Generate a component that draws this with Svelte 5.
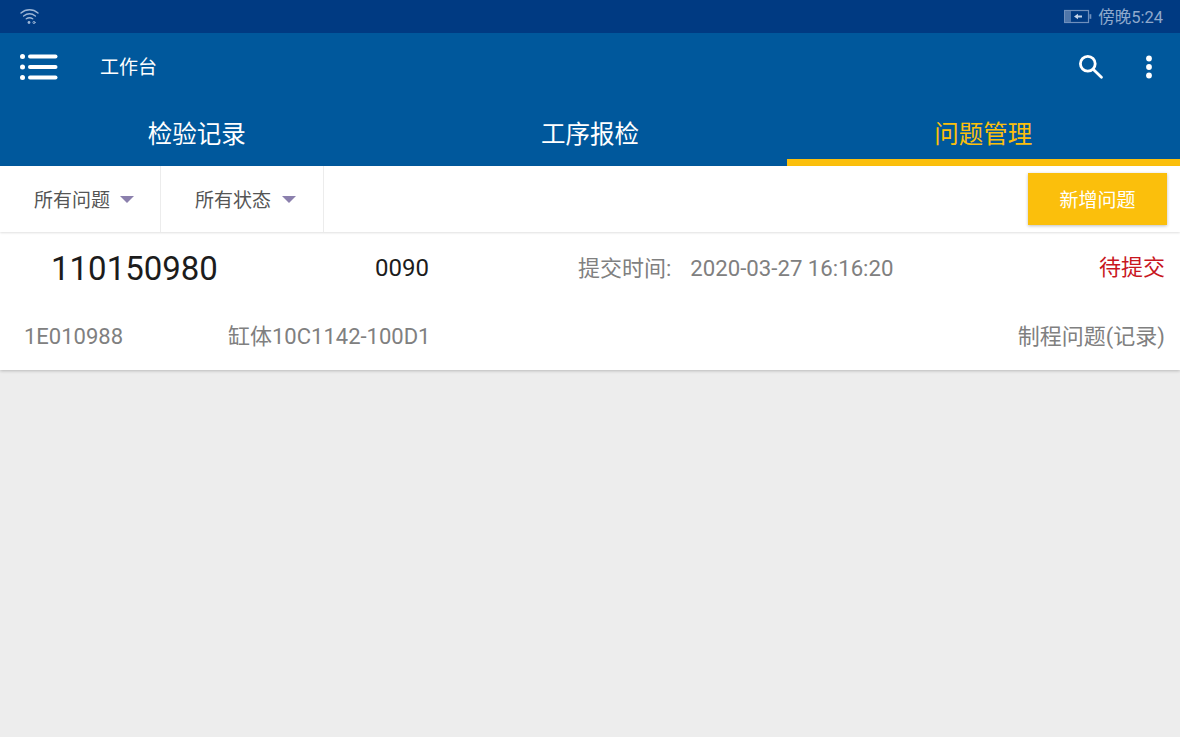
<script>
    const tabs = ['检验记录', '工序报检', '问题管理'];
    let activeTab = 2;
    const filters = ['所有问题', '所有状态'];
</script>

<div class="page">
    <div class="statusbar">
        <svg class="wifi" width="20" height="17" viewBox="0 0 20 17" fill="none" stroke="#9db6d6" stroke-width="1.4" stroke-linecap="round">
            <path d="M1 5 C6 .6 13 .6 18 5" />
            <path d="M3.6 8 C7.5 5 11.5 5 15.4 8" />
            <path d="M6.3 10.8 C8.3 9.4 10.7 9.4 12.7 10.8" />
            <circle cx="9" cy="14.5" r="1.4" fill="#9db6d6" stroke="none" />
            <circle cx="14" cy="14.5" r="1.1" stroke-width="0.9" />
        </svg>
        <div class="status-right">
            <svg width="28" height="15" viewBox="0 0 28 15" fill="none">
                <rect x="0.5" y="1.5" width="24" height="12" stroke="#6f8fbc" stroke-width="1.2" />
                <rect x="1" y="2" width="6" height="11" fill="#4f76aa" />
                <rect x="25.5" y="5.2" width="1.8" height="4.6" fill="#6f8fbc" />
                <path d="M10 7.5 L14 4.8 V6.6 H18 V8.4 H14 V10.2 Z" fill="#c4d3e7" />
            </svg>
            <span class="clock">傍晚5:24</span>
        </div>
    </div>

    <div class="toolbar">
        <svg class="menu" width="40" height="28" viewBox="0 0 40 28" fill="#fff">
            <circle cx="3.5" cy="3.5" r="2.5" />
            <circle cx="3.5" cy="14" r="2.5" />
            <circle cx="3.5" cy="24.5" r="2.5" />
            <rect x="9" y="1.5" width="29.5" height="4" rx="2" />
            <rect x="9" y="12" width="29.5" height="4" rx="2" />
            <rect x="9" y="22.5" width="29.5" height="4" rx="2" />
        </svg>
        <span class="title">工作台</span>
        <div class="actions">
            <svg class="search" width="26" height="26" viewBox="0 0 26 26" fill="none" stroke="#fff" stroke-width="2.8" stroke-linecap="round">
                <circle cx="10.8" cy="10.8" r="7.4" />
                <path d="M16.4 16.4 L24.4 24.2" />
            </svg>
            <svg width="8" height="24" viewBox="0 0 8 24" fill="#fff">
                <circle cx="4" cy="3.5" r="2.9" />
                <circle cx="4" cy="12" r="2.9" />
                <circle cx="4" cy="20.5" r="2.9" />
            </svg>
        </div>
    </div>

    <div class="tabs">
        {#each tabs as tab, i}
            <button class="tab" class:active={i === activeTab} onclick={() => (activeTab = i)}>{tab}</button>
        {/each}
    </div>

    <div class="filterbar">
        {#each filters as filter}
            <div class="filter">
                <span class="filter-label">{filter}</span>
                <i class="caret"></i>
            </div>
        {/each}
        <button class="add">新增问题</button>
    </div>

    <div class="card">
        <div class="row top">
            <span class="code">110150980</span>
            <span class="seq">0090</span>
            <span class="time">提交时间:<span class="date">2020-03-27 16:16:20</span></span>
            <span class="state">待提交</span>
        </div>
        <div class="row bottom">
            <span class="part">1E010988</span>
            <span class="name">缸体10C1142-100D1</span>
            <span class="kind">制程问题(记录)</span>
        </div>
    </div>
</div>

<style>
    :global(body) {
        margin: 0;
        background: #ededed;
    }

    .page {
        height: 737px;
        overflow: hidden;
        background: #ededed;
        font-family: Roboto, "Noto Sans CJK SC", sans-serif;
        line-height: 1.2;
    }

    .statusbar {
        height: 33px;
        background: #003a82;
        display: flex;
        align-items: center;
        justify-content: space-between;
        padding: 0 17px 0 20px;
        color: #8fa9cc;
        font-size: 16.5px;
    }

    .wifi {
        margin-bottom: 1px;
    }

    .status-right {
        display: flex;
        align-items: center;
        gap: 6px;
    }

    .clock {
        padding-top: 2px;
    }

    .toolbar {
        height: 67px;
        background: #00589c;
        display: flex;
        align-items: center;
        padding: 0 27px 0 19px;
        color: #fff;
    }

    .title {
        margin-left: 41px;
        padding-top: 4px;
        font-size: 19px;
    }

    .actions {
        margin-left: auto;
        display: flex;
        align-items: center;
        gap: 42px;
    }

    .search {
        margin-bottom: 2px;
    }

    .tabs {
        height: 66px;
        background: #00589c;
        display: grid;
        grid-template-columns: repeat(3, 1fr);
    }

    .tab {
        border: 0;
        background: none;
        padding: 10px 0 0;
        color: #fff;
        font: inherit;
        font-size: 24.5px;
        box-sizing: border-box;
        border-bottom: 7px solid transparent;
    }

    .tab.active {
        color: #fbbf0c;
        border-bottom-color: #fbbf0c;
    }

    .filterbar {
        height: 66px;
        background: #fff;
        display: flex;
        align-items: center;
        padding-right: 13px;
        box-shadow: 0 1px 2px rgba(0, 0, 0, 0.12);
        position: relative;
    }

    .filter {
        height: 100%;
        width: 161px;
        box-sizing: border-box;
        padding-left: 34px;
        border-right: 1px solid #ececec;
        display: flex;
        align-items: center;
        gap: 10px;
        font-size: 19px;
        color: #555;
    }

    .filter + .filter {
        width: 163px;
        gap: 11px;
    }

    .filter-label {
        padding-top: 4px;
    }

    .caret {
        width: 0;
        height: 0;
        border-left: 7px solid transparent;
        border-right: 7px solid transparent;
        border-top: 7px solid #8b80ad;
    }

    .add {
        margin-left: auto;
        width: 139px;
        height: 52px;
        border: 0;
        padding: 4px 0 0;
        background: #fbbf0c;
        color: #fff;
        font: inherit;
        font-size: 19px;
        box-shadow: 0 1px 3px rgba(0, 0, 0, 0.25);
    }

    .card {
        background: #fff;
        height: 138px;
        box-shadow: 0 1px 3px rgba(0, 0, 0, 0.22);
        padding: 0 15px 0 24px;
        display: flex;
        flex-direction: column;
        box-sizing: border-box;
    }

    .row {
        display: flex;
        align-items: center;
    }

    .top {
        height: 73px;
    }

    .bottom {
        height: 65px;
    }

    .code {
        margin-left: 27px;
        width: 324px;
        font-size: 33px;
        color: #1c1c1c;
    }

    .seq {
        width: 203px;
        font-size: 24px;
        color: #1c1c1c;
    }

    .time {
        font-size: 22px;
        color: #808080;
    }

    .date {
        margin-left: 19px;
        font-size: 22.2px;
    }

    .state {
        margin-left: auto;
        font-size: 22px;
        color: #c8161e;
    }

    .part {
        width: 204px;
        font-size: 22px;
        color: #808080;
    }

    .name {
        font-size: 22px;
        color: #808080;
    }

    .kind {
        margin-left: auto;
        font-size: 22px;
        color: #808080;
    }
</style>
